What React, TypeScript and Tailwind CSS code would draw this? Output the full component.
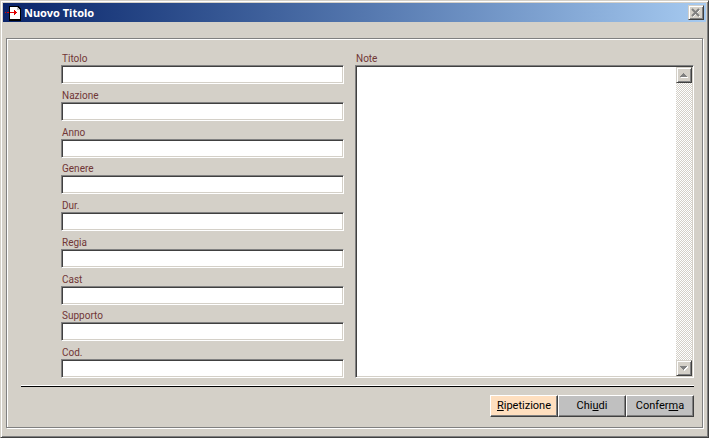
import { useState } from "react"

const fields = [
  { id: "titolo", label: "Titolo" },
  { id: "nazione", label: "Nazione" },
  { id: "anno", label: "Anno" },
  { id: "genere", label: "Genere" },
  { id: "durata", label: "Dur." },
  { id: "regia", label: "Regia" },
  { id: "cast", label: "Cast" },
  { id: "supporto", label: "Supporto" },
  { id: "codice", label: "Cod." },
]

const sunken =
  "w-full resize-none rounded-none border border-t-[#808080] border-l-[#808080] border-r-white border-b-white bg-white text-[11px] text-black outline-none shadow-[inset_1px_1px_0_#404040,inset_-1px_-1px_0_#d4d0c8]"

const raised =
  "border border-t-[#d4d0c8] border-l-[#d4d0c8] border-r-[#404040] border-b-[#404040] shadow-[inset_1px_1px_0_#ffffff,inset_-1px_-1px_0_#808080]"

const commandButton =
  "h-[22px] w-[68px] border border-t-white border-l-white border-r-[#404040] border-b-[#404040] text-[11px] leading-[18px] text-black shadow-[inset_-1px_-1px_0_#808080]"

const labelText = "block pl-px text-[10px] leading-[13px] text-[#713636]"

const FormIcon = () => (
  <svg width="16" height="16" viewBox="0 0 16 16" shapeRendering="crispEdges" aria-hidden="true">
    <path d="M4 1h9l3 3v12H4z" fill="#000" />
    <path d="M5 2h7v3h3v9H5z" fill="#fff" />
    <path d="M12 2l3 3h-3z" fill="#c0c0c0" />
    <path d="M0 7h1v1H0zM2 7h2v1H2zM5 7h4V5h1v1h1v1h1v1h-1v1h-1v1H9V8H5z" fill="#e00000" />
  </svg>
)

const ScrollArrow = ({ up, label }: { up?: boolean; label: string }) => (
  <button
    type="button"
    aria-label={label}
    className={`flex h-4 w-4 items-center justify-center bg-[#d4d0c8] ${raised}`}
  >
    <svg width="8" height="5" viewBox="0 0 8 5" shapeRendering="crispEdges" aria-hidden="true">
      <path d={up ? "M1 5h7V4H1z" : "M8 1L4 5V4l3-4z"} fill="#fff" />
      <path
        d={up ? "M3 0h1v1h1v1h1v1h1v1H0V3h1V2h1V1h1z" : "M0 0h7v1H6v1H5v1H4v1H3V3H2V2H1V1H0z"}
        fill="#808080"
      />
    </svg>
  </button>
)

const App = () => {
  const [values, setValues] = useState<Record<string, string>>({})
  const [note, setNote] = useState<string>("")

  return (
    <div className="flex min-h-screen flex-col border border-t-[#d4d0c8] border-l-[#d4d0c8] border-r-[#404040] border-b-[#404040] bg-[#d4d0c8] p-[2px] font-[Roboto,sans-serif] shadow-[inset_1px_1px_0_#ffffff,inset_-1px_-1px_0_#808080]">
      <header className="flex h-[19px] items-center bg-linear-to-r from-[#0a246a] to-[#a6caf0] px-[2px]">
        <FormIcon />
        <h1 className="ml-[3px] flex-1 font-['Noto_Sans',sans-serif] text-[11px] leading-[18px] font-bold text-white">
          Nuovo Titolo
        </h1>
        <button
          type="button"
          aria-label="Chiudi finestra"
          className={`flex h-[15px] w-4 items-center justify-center bg-[#d4d0c8] ${raised}`}
        >
          <svg width="10" height="9" viewBox="0 0 10 9" aria-hidden="true">
            <path d="M2 2l7 7M9 2l-7 7" stroke="#fff" strokeWidth="1" />
            <path d="M1 1l7 7M8 1l-7 7" stroke="#808080" strokeWidth="2" />
          </svg>
        </button>
      </header>

      <main className="mx-[3px] mt-4 mb-[7px] flex flex-1 flex-col border border-[#808080] pt-[13px] pr-2 pb-[10px] pl-[14px] shadow-[inset_1px_1px_0_#ffffff,1px_1px_0_#ffffff]">
        <form className="flex flex-1 flex-col" onSubmit={(e) => e.preventDefault()}>
          <div className="flex flex-1 gap-[11px] pl-10">
            <div className="flex flex-[283] flex-col justify-between">
              {fields.map((field) => (
                <div key={field.id}>
                  <label htmlFor={field.id} className={labelText}>
                    {field.label}
                  </label>
                  <input
                    id={field.id}
                    type="text"
                    value={values[field.id] ?? ""}
                    onChange={(e) => setValues({ ...values, [field.id]: e.target.value })}
                    className={`block h-[19px] px-1 ${sunken}`}
                  />
                </div>
              ))}
            </div>
            <div className="flex flex-[339] flex-col">
              <label htmlFor="note" className={labelText}>
                Note
              </label>
              <div className={`flex flex-1 p-px ${sunken}`}>
                <textarea
                  id="note"
                  value={note}
                  onChange={(e) => setNote(e.target.value)}
                  className="block flex-1 resize-none overflow-hidden px-1 outline-none"
                />
                <div className="flex w-4 flex-col justify-between bg-[repeating-conic-gradient(#ffffff_0_25%,#d4d0c8_0_50%)] bg-size-[2px_2px]">
                  <ScrollArrow up label="Scorri su" />
                  <ScrollArrow label="Scorri giù" />
                </div>
              </div>
            </div>
          </div>

          <hr className="mt-[7px] border-t border-t-white" />
          <hr className="border-t border-t-black" />

          <div className="mt-2 flex justify-end">
            <button type="button" className={`bg-[#ffdfbf] ${commandButton}`}>
              <u>R</u>ipetizione
            </button>
            <button type="button" className={`bg-[#c0c0c0] ${commandButton}`}>
              Chi<u>u</u>di
            </button>
            <button type="submit" className={`bg-[#c0c0c0] ${commandButton}`}>
              Confer<u>m</u>a
            </button>
          </div>
        </form>
      </main>
    </div>
  )
}

export default App
